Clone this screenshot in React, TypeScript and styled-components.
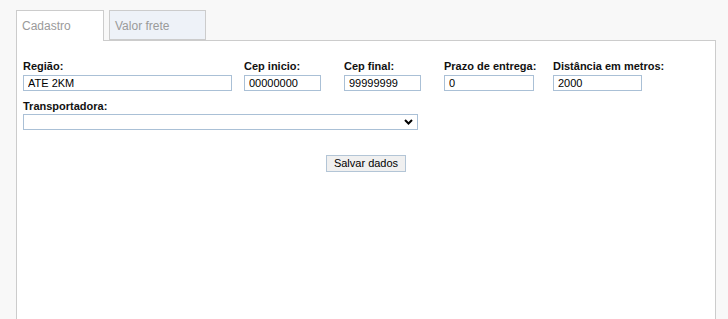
import React from 'react';
import styled, {createGlobalStyle} from 'styled-components';

const GlobalStyle = createGlobalStyle`
    html, body {
        margin: 0;
        padding: 0;
        background: #f8f8f8;
        font-family: "Liberation Sans", Arial, sans-serif;
    }
`;

interface Field {
    label: string;
    value: string;
    boxWidth: number;
    inputWidth: number;
}

const fields: Field[] = [
    {label: 'Região:', value: 'ATE 2KM', boxWidth: 221, inputWidth: 209},
    {label: 'Cep inicio:', value: '00000000', boxWidth: 100, inputWidth: 77},
    {label: 'Cep final:', value: '99999999', boxWidth: 100, inputWidth: 77},
    {label: 'Prazo de entrega:', value: '0', boxWidth: 109, inputWidth: 90},
    {label: 'Distância em metros:', value: '2000', boxWidth: 120, inputWidth: 89},
];

const App = () => (
    <>
        <GlobalStyle/>
        <Page>
            <TabBar>
                <Tab $active={true} $width={88}>{'Cadastro'}</Tab>
                <Tab $active={false} $width={97}>{'Valor frete'}</Tab>
            </TabBar>
            <Panel>
                <FieldRow>
                    {fields.map((f) => (
                        <FieldBox key={f.label} $width={f.boxWidth}>
                            <Label>{f.label}</Label>
                            <TextInput
                                type='text'
                                defaultValue={f.value}
                                $width={f.inputWidth}
                            />
                        </FieldBox>
                    ))}
                </FieldRow>
                <SelectBox>
                    <Label>{'Transportadora:'}</Label>
                    <SelectWrap>
                        <Select defaultValue=''>
                            <option value=''/>
                        </Select>
                        <Chevron
                            width='9'
                            height='6'
                            viewBox='0 0 9 6'
                        >
                            <path
                                d='M1 1 L4.5 4.5 L8 1'
                                fill='none'
                                stroke='#000'
                                strokeWidth='2'
                            />
                        </Chevron>
                    </SelectWrap>
                </SelectBox>
                <Actions>
                    <SaveButton type='button'>{'Salvar dados'}</SaveButton>
                </Actions>
            </Panel>
        </Page>
    </>
);

const Page = styled.div`
    padding: 10px 0 0 16px;
`;

const TabBar = styled.div`
    display: flex;
    gap: 5px;
    align-items: flex-end;
`;

const Tab = styled.div<{$active: boolean; $width: number}>`
    box-sizing: border-box;
    width: ${(p) => p.$width}px;
    height: ${(p) => (p.$active ? 31 : 30)}px;
    margin-bottom: ${(p) => (p.$active ? -1 : 0)}px;
    padding: 8px 0 0 5px;
    font-size: 12px;
    line-height: 14px;
    color: #9a9a9a;
    background: ${(p) => (p.$active ? '#fff' : '#eef2f8')};
    border: 1px solid #cccccc;
    border-bottom: ${(p) => (p.$active ? 'none' : '1px solid #cccccc')};
    position: relative;
    z-index: ${(p) => (p.$active ? 1 : 0)};
`;

const Panel = styled.div`
    box-sizing: border-box;
    width: 700px;
    min-height: 290px;
    padding: 19px 6px 0;
    background: #fff;
    border: 1px solid #cccccc;
`;

const FieldRow = styled.div`
    display: flex;
`;

const FieldBox = styled.div<{$width: number}>`
    width: ${(p) => p.$width}px;
    flex: none;
    display: flex;
    flex-direction: column;
`;

const Label = styled.label`
    display: block;
    height: 13px;
    margin-bottom: 2px;
    font-size: 11px;
    line-height: 13px;
    font-weight: bold;
    color: #111;
    white-space: nowrap;
`;

const TextInput = styled.input<{$width: number}>`
    box-sizing: border-box;
    width: ${(p) => p.$width}px;
    height: 16px;
    margin: 0;
    padding: 0 4px;
    font-family: "Liberation Sans", Arial, sans-serif;
    font-size: 11px;
    color: #000;
    background: #fff;
    border: 1px solid #aac0d6;
    border-radius: 0;
    outline: none;
`;

const SelectBox = styled.div`
    margin-top: 9px;
    display: flex;
    flex-direction: column;

    ${Label} {
        margin-bottom: 1px;
    }
`;

const SelectWrap = styled.div`
    position: relative;
    width: 395px;
`;

const Select = styled.select`
    box-sizing: border-box;
    display: block;
    width: 395px;
    height: 16px;
    margin: 0;
    padding: 0 4px;
    font-family: "Liberation Sans", Arial, sans-serif;
    font-size: 11px;
    background: #fff;
    border: 1px solid #aac0d6;
    border-radius: 0;
    appearance: none;
    outline: none;
`;

const Chevron = styled.svg`
    position: absolute;
    right: 5px;
    top: 5px;
    pointer-events: none;
`;

const Actions = styled.div`
    display: flex;
    justify-content: center;
    margin-top: 25px;
`;

const SaveButton = styled.button`
    box-sizing: border-box;
    width: 80px;
    height: 17px;
    margin: 0;
    padding: 0;
    font-family: "Liberation Sans", Arial, sans-serif;
    font-size: 11px;
    line-height: 15px;
    color: #000;
    background: #f0f0f0;
    border: 1px solid #b3c5d6;
    border-radius: 0;
`;

export default App;
